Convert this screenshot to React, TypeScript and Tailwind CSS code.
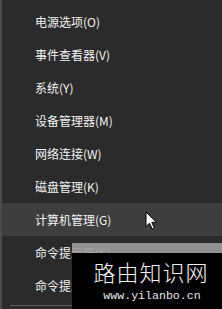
import { type FC } from 'react';

const items = [
  '电源选项(O)',
  '事件查看器(V)',
  '系统(Y)',
  '设备管理器(M)',
  '网络连接(W)',
  '磁盘管理(K)',
  '计算机管理(G)',
  '命令提示符(C)',
  '命令提示符(管理员)(A)',
];

const Cursor: FC = () => (
  <svg width="13" height="19" viewBox="0 0 13 19" className="absolute left-[143px] top-[211px]">
    <path
      d="M1 1 L1 15.5 L4.5 12.2 L7.2 18 L9.4 17 L6.8 11.3 L11.5 11.3 Z"
      fill="#ffffff"
      stroke="#000000"
      strokeWidth="1"
      strokeLinejoin="round"
    />
  </svg>
);

export default function App() {
  return (
    <div
      className="relative w-[222px] h-[309px] overflow-hidden bg-[#2b2b2b] border-l-2 border-[#4b4b4b]"
      style={{ fontFamily: '"Noto Sans CJK SC", "Noto Sans", sans-serif' }}
    >
      <div className="pt-[5px]">
        {items.map((label, i) => (
          <div
            key={i}
            className={`h-[33px] flex items-center pl-[33px] text-[12px] text-[#f2f2f2] whitespace-nowrap ${
              i === 6 ? 'bg-[#3e3e3e]' : ''
            }`}
          >
            {label}
          </div>
        ))}
      </div>
      <div className="ml-[8px] mt-[3px] h-px bg-[#5c5c5c]" />

      <Cursor />

      {/* watermark */}
      <div className="absolute left-[70px] top-[243px] right-0 bottom-0 flex flex-col">
        <div className="h-[10px] bg-[#9c9c9c]/90" />
        <div className="flex-1 bg-black flex flex-col items-center">
          <div
            className="mt-[7px] text-[22px] leading-[22px] text-[#f4f4f4] font-light tracking-[1px] pl-[8px]"
            style={{ fontFamily: '"Noto Sans CJK SC", sans-serif' }}
          >
            路由知识网
          </div>
          <div
            className="mt-[8px] text-[11.6px] leading-[12px] text-[#e8e8e8] pl-[10px]"
            style={{ fontFamily: '"Liberation Mono", monospace' }}
          >
            www.yilanbo.cn
          </div>
        </div>
      </div>
    </div>
  );
}
